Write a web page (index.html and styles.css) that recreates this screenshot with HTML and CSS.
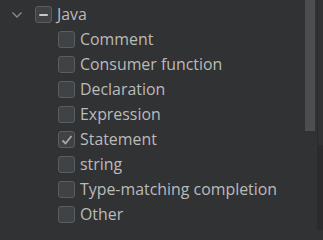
FILE: index.html
```html
<!DOCTYPE html>
<html>
<head>
<meta charset="utf-8">
<link rel="stylesheet" href="styles.css">
</head>
<body>
<div class="panel">
  <div class="tree">
    <div class="row parent">
      <svg class="chev" width="12" height="8" viewBox="0 0 12 8"><path d="M1.5 1.5 L6 6 L10.5 1.5" fill="none" stroke="#8c8c8c" stroke-width="1.3"/></svg>
      <span class="box"><span class="dash"></span></span>
      <span class="label">Java</span>
    </div>
    <div class="row child"><span class="box"></span><span class="label">Comment</span></div>
    <div class="row child"><span class="box"></span><span class="label">Consumer function</span></div>
    <div class="row child"><span class="box"></span><span class="label">Declaration</span></div>
    <div class="row child"><span class="box"></span><span class="label">Expression</span></div>
    <div class="row child"><span class="box"><svg width="14" height="14" viewBox="0 0 14 14"><path d="M2.5 7.5 L5.5 10.5 L11.5 3" fill="none" stroke="#a9a9a9" stroke-width="1.8"/></svg></span><span class="label">Statement</span></div>
    <div class="row child"><span class="box"></span><span class="label">string</span></div>
    <div class="row child"><span class="box"></span><span class="label">Type-matching completion</span></div>
    <div class="row child"><span class="box"></span><span class="label">Other</span></div>
  </div>
  <div class="scroll"><div class="thumb"></div></div>
  <div class="edge"><div class="edge-top"></div><div class="edge-bottom"></div></div>
</div>
</body>
</html>
```
FILE: styles.css
```css
html, body {
  margin: 0;
  padding: 0;
  background: #313233;
}
.panel {
  display: flex;
  width: 323px;
  height: 230px;
  overflow: hidden;
  font-family: "Open Sans", "Noto Sans", sans-serif;
  font-size: 15.9px;
  color: #bbbbbb;
}
.tree {
  flex: 1;
  padding-top: 2px;
}
.row {
  display: flex;
  align-items: center;
  height: 25px;
}
.parent {
  padding-left: 11px;
}
.chev {
  width: 12px;
  margin-right: 12px;
}
.child {
  padding-left: 58px;
}
.box {
  box-sizing: border-box;
  width: 17px;
  height: 17px;
  border: 1px solid #5b5e60;
  border-radius: 3px;
  background: #404345;
  display: flex;
  align-items: center;
  justify-content: center;
  margin-right: 5px;
  flex-shrink: 0;
}
.dash {
  width: 9px;
  height: 2px;
  background: #c8c8c8;
  border-radius: 1px;
}
.label {
  white-space: nowrap;
  line-height: 1;
}
.scroll {
  width: 10px;
  margin-right: 2px;
}
.thumb {
  height: 131px;
  background: #4c4e50;
}
.edge {
  width: 5px;
  display: flex;
  flex-direction: column;
  border-left: 1px solid #2b2b2b;
}
.edge-top {
  height: 145px;
  background: #313233;
}
.edge-bottom {
  flex: 1;
  background: #2b2b2d;
}
```
